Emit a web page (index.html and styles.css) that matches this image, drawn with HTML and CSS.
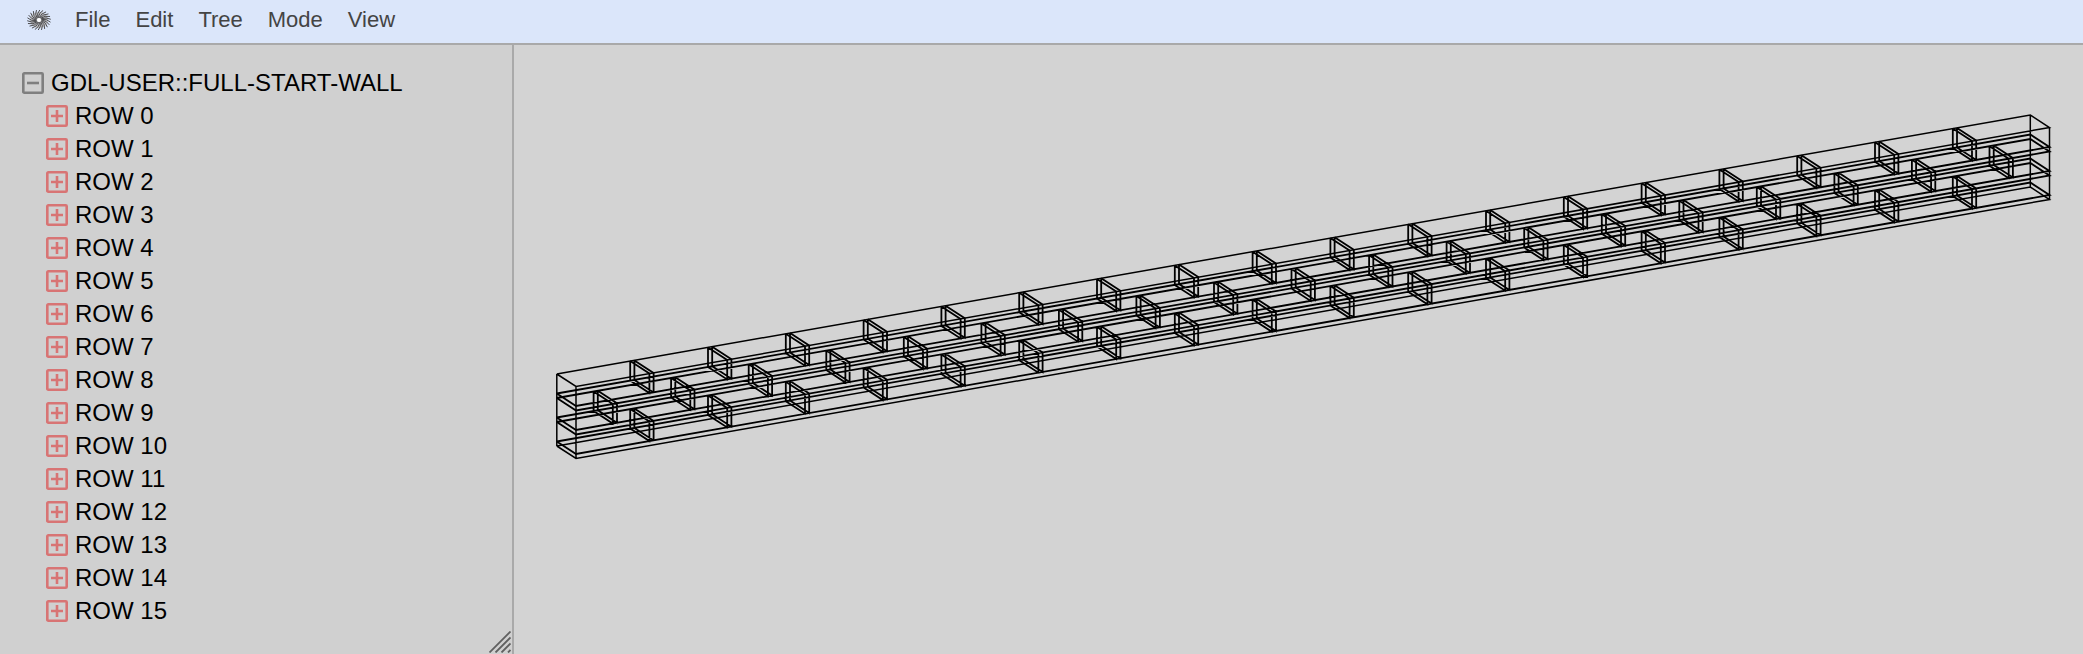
FILE: index.html
```html
<!DOCTYPE html>
<html lang="en">
<head>
<meta charset="utf-8">
<title>GDL-USER::FULL-START-WALL</title>
<link rel="stylesheet" href="styles.css">
</head>
<body>
<header class="menubar">
  <svg class="logo" viewBox="-12 -10 24 20" aria-hidden="true">
    <ellipse class="logo-disc" rx="9" ry="8"/>
    <g id="logo-blades" class="logo-blades"></g>
    <circle class="logo-core" r="2"/>
  </svg>
  <nav class="menu">
    <button type="button">File</button>
    <button type="button">Edit</button>
    <button type="button">Tree</button>
    <button type="button">Mode</button>
    <button type="button">View</button>
  </nav>
</header>
<main class="workspace">
  <aside class="sidebar">
    <div class="tree">
      <button type="button" class="node">
        <svg class="toggle open" viewBox="0 0 22 22" aria-hidden="true"><rect x="1.3" y="1.3" width="19.4" height="19.4" rx="1"/><path d="M5 11H17"/></svg>
        <span>GDL-USER::FULL-START-WALL</span>
      </button>
      <div class="children" id="rows"></div>
    </div>
    <svg class="grip" viewBox="0 0 22 22" aria-hidden="true"><path d="M.5 21.500L21.500 .5M6.500 21.500L21.500 6.500M12.500 21.500L21.500 12.500M19 21.500L21.500 19"/></svg>
  </aside>
  <section class="viewport">
    <svg class="scene" viewBox="0 0 1569 609" preserveAspectRatio="xMidYMin meet" role="img" aria-label="Wall wireframe">
      <path id="outline" d=""/>
      <path id="shared" class="shared" d=""/>
    </svg>
  </section>
</main>
<script src="app.js"></script>
</body>
</html>
```
FILE: styles.css
```css
* { box-sizing: border-box; }

body {
  margin: 0;
  min-height: 100vh;
  display: flex;
  flex-direction: column;
  background: #d3d3d3;
  color: #000;
  font-family: "Liberation Sans", Arial, sans-serif;
  font-size: 24px;
}

button {
  border: 0;
  padding: 0;
  background: none;
  font: inherit;
  color: inherit;
  cursor: pointer;
}

.menubar {
  display: flex;
  align-items: center;
  gap: 24px;
  padding: 0 27px 4px;
  height: 45px;
  background: #dbe6fa;
  border-bottom: 2px solid #a9a9a9;
}

.logo { width: 24px; height: 20px; }
.logo-disc { fill: #bfc0c4; }
.logo-blades { fill: none; stroke: #4c4c4e; stroke-width: 1; }
.logo-core { fill: #fff; }

.menu {
  display: flex;
  gap: 25px;
  font-size: 22px;
  color: #444;
}

.workspace {
  flex: 1;
  display: flex;
}

.sidebar {
  flex: 0 0 514px;
  display: flex;
  flex-direction: column;
  justify-content: space-between;
  padding: 21px 1px 1px 22px;
  background: #d0d0d0;
  border-right: 2px solid #a9a9a9;
}

.tree, .children {
  display: flex;
  flex-direction: column;
  align-items: flex-start;
}

.children { padding-left: 24px; }

.node {
  display: flex;
  align-items: center;
  gap: 7px;
  height: 33px;
}

.toggle {
  width: 22px;
  height: 22px;
  fill: none;
  stroke: #d87474;
  stroke-width: 2.6;
}

.toggle.open { stroke: #7f7f7f; }

.grip {
  align-self: flex-end;
  width: 22px;
  height: 22px;
  fill: none;
  stroke: #606060;
  stroke-width: 1.8;
}

.viewport {
  flex: 1;
  min-width: 0;
}

.scene {
  display: block;
  width: 100%;
  fill: none;
  stroke: #000;
  stroke-width: 1.5;
}

.shared { stroke-width: 1.8; }
```
FILE: app.js
```js
// Tree rows
const rows = document.getElementById('rows');
for (let i = 0; i < 16; i++) {
  rows.insertAdjacentHTML('beforeend',
    '<button type="button" class="node">' +
    '<svg class="toggle" viewBox="0 0 22 22" aria-hidden="true"><rect x="1.3" y="1.3" width="19.4" height="19.4" rx="1"/><path d="M5 11H17M11 5V17"/></svg>' +
    '<span>ROW ' + i + '</span></button>');
}

// Logo: a spiral of curved blades
let blades = '';
for (let i = 0; i < 22; i++) {
  const a = i * Math.PI / 11;
  const p = (r, t) => (r * Math.cos(t)).toFixed(2) + ' ' + (r * 0.86 * Math.sin(t)).toFixed(2);
  blades += '<path d="M' + p(2.6, a) + 'Q' + p(8, a + 0.1) + ' ' + p(11.8, a + 0.5) + '"/>';
}
document.getElementById('logo-blades').innerHTML = blades;

// Wall: oblique projection of bricks and mortar joints.
// u runs along the wall, v is depth (0 back, 1 front), z is distance below the top.
const SLOPE = -259 / 1473.5;
const LENGTH = 1473.5;
const point = (u, v, z) =>
  (42.8 + u + v * 19.2).toFixed(1) + ' ' + (329 + u * SLOPE + v * 12.5 + z).toFixed(1);
const path = (...pts) => 'M' + pts.map(p => point(...p)).join('L');
const level = z => path([0, 0, z], [0, 1, z], [LENGTH, 1, z], [LENGTH, 0, z], [0, 0, z]);

let outline = level(0) + level(72);
for (const u of [0, LENGTH]) {
  for (const v of [0, 1]) outline += path([u, v, 0], [u, v, 72]);
}

// Edges where a brick touches mortar
let shared = '';
for (const z of [19.5, 24, 43.5, 48, 67.5]) shared += level(z);
const joint = (u, z) => {
  for (const e of [u, u + 4.2]) {
    shared += path([e, 0, z], [e, 1, z], [e, 1, z + 19.5], [e, 0, z + 19.5], [e, 0, z]);
  }
};
for (let i = 0; i < 18; i++) {
  joint(73.4 + i * 77.8, 0);
  joint(73.4 + i * 77.8, 48);
}
for (let i = 0; i < 19; i++) joint(36.8 + i * 77.55, 24);

document.getElementById('outline').setAttribute('d', outline);
document.getElementById('shared').setAttribute('d', shared);
```
